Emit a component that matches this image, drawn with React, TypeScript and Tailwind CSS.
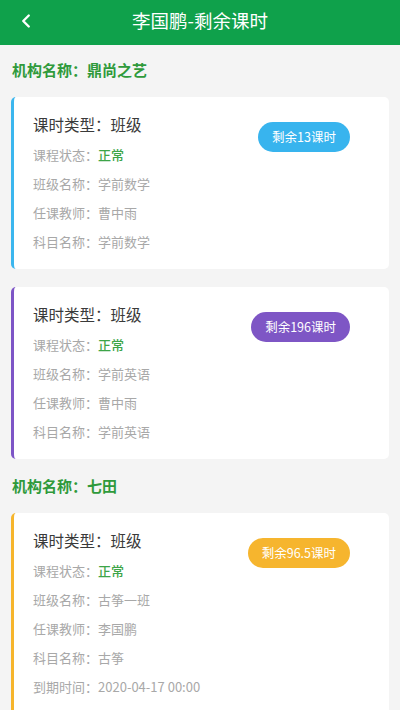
import { ChevronLeft } from 'lucide-react';

type Course = {
  badge: string;
  color: 'blue' | 'purple' | 'orange';
  className: string;
  teacher: string;
  subject: string;
  expire?: string;
};

const groups: { org: string; courses: Course[] }[] = [
  {
    org: '鼎尚之艺',
    courses: [
      { badge: '剩余13课时', color: 'blue', className: '学前数学', teacher: '曹中雨', subject: '学前数学' },
      { badge: '剩余196课时', color: 'purple', className: '学前英语', teacher: '曹中雨', subject: '学前英语' },
    ],
  },
  {
    org: '七田',
    courses: [
      {
        badge: '剩余96.5课时',
        color: 'orange',
        className: '古筝一班',
        teacher: '李国鹏',
        subject: '古筝',
        expire: '2020-04-17 00:00',
      },
    ],
  },
];

const borderColor = {
  blue: 'border-[#3bb6ee]',
  purple: 'border-[#7d55c6]',
  orange: 'border-[#f6b52c]',
};

const badgeColor = {
  blue: 'bg-[#38b4ee]',
  purple: 'bg-[#7e56c5]',
  orange: 'bg-[#f6b52e]',
};

function Row({ label, value, green }: { label: string; value: string; green?: boolean }) {
  return (
    <div className="h-[29px] flex items-center text-[13px] text-[#a8a8a8]">
      <span>{label}：</span>
      <span className={green ? 'text-[#3da548] font-medium' : ''}>{value}</span>
    </div>
  );
}

function CourseCard({ c }: { c: Course }) {
  return (
    <div className={`mx-[11px] bg-white rounded-[5px] border-l-[3px] ${borderColor[c.color]} flex pl-[19px] pr-[39px] pt-[16px] pb-[13px]`}>
      <div className="flex-1">
        <div className="h-[22px] leading-[22px] text-[15.5px] text-[#3a3a3a] mb-[5px]">课时类型：班级</div>
        <Row label="课程状态" value="正常" green />
        <Row label="班级名称" value={c.className} />
        <Row label="任课教师" value={c.teacher} />
        <Row label="科目名称" value={c.subject} />
        {c.expire && <Row label="到期时间" value={c.expire} />}
      </div>
      <div className={`mt-[9px] h-[30px] px-[14px] rounded-full ${badgeColor[c.color]} text-white text-[12.5px] flex items-center`}>
        {c.badge}
      </div>
    </div>
  );
}

export default function App() {
  return (
    <div
      className="w-[400px] h-[710px] overflow-hidden bg-[#f4f4f4]"
      style={{ fontFamily: '"Noto Sans CJK SC", "Noto Sans", sans-serif' }}
    >
      <div className="h-[45px] bg-[#0fa14b] relative flex items-center justify-center">
        <ChevronLeft className="absolute left-[15px] top-[10px] w-[22px] h-[22px] text-white" strokeWidth={2.6} />
        <span className="text-white text-[18.5px] -mt-[4px]">李国鹏-剩余课时</span>
      </div>

      {groups.map((g, gi) => (
        <div key={g.org} className={gi === 0 ? 'pt-[16px]' : 'pt-[18px]'}>
          <div className="px-[12px] h-[18px] leading-[18px] text-[15px] font-bold text-[#2f9a3b] mb-[18px]">
            机构名称：{g.org}
          </div>
          <div className="flex flex-col gap-[18px]">
            {g.courses.map((c) => (
              <CourseCard key={c.badge} c={c} />
            ))}
          </div>
        </div>
      ))}
    </div>
  );
}
